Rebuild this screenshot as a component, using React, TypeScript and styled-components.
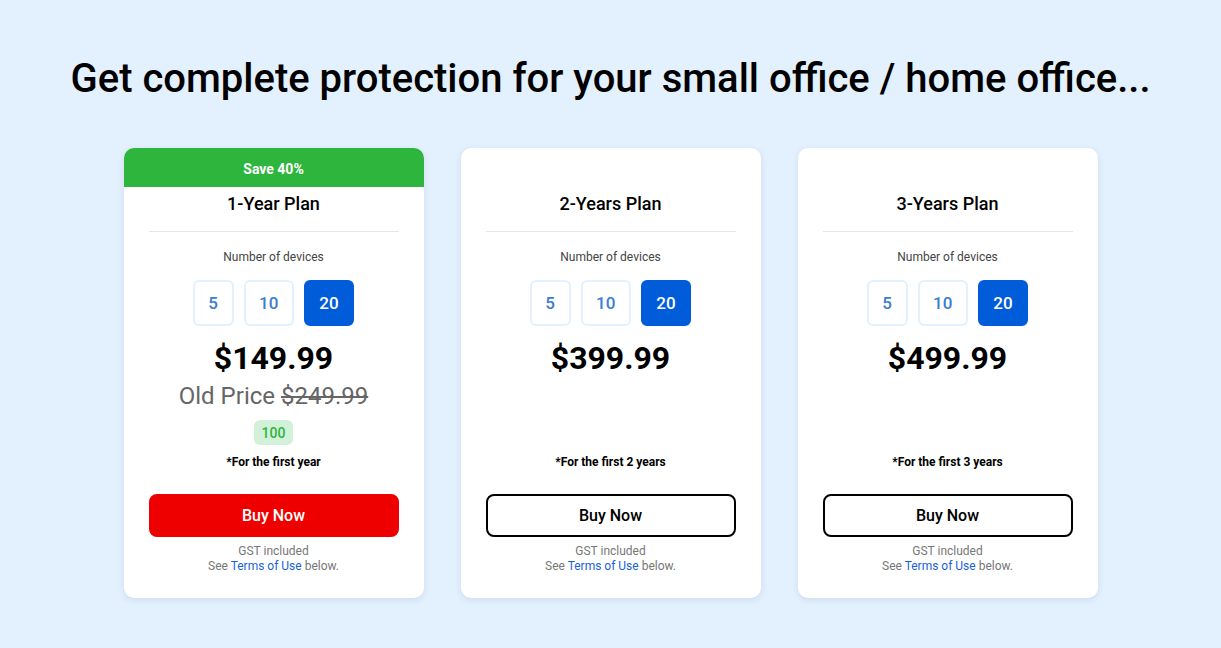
import React from "react";
import styled, { createGlobalStyle } from "styled-components";

const Global = createGlobalStyle`
  html, body { margin: 0; padding: 0; }
  body {
    background: #e3f0fd;
    font-family: Roboto, "Noto Sans", Arial, sans-serif;
    color: #000;
  }
  * { box-sizing: border-box; }
`;

const Page = styled.div`
  width: 1221px;
  min-height: 648px;
  display: flex;
  flex-direction: column;
  align-items: center;
  padding-top: 56px;
`;

const Heading = styled.h1`
  margin: 0;
  font-size: 40px;
  line-height: 46px;
  font-weight: 500;
  text-align: center;
  color: #000;
`;

const Cards = styled.div`
  display: flex;
  gap: 37px;
  margin-top: 46px;
`;

const Card = styled.div`
  width: 300px;
  height: 450px;
  background: #fff;
  border-radius: 10px;
  overflow: hidden;
  box-shadow: 0 2px 6px rgba(40, 80, 130, 0.12);
  display: flex;
  flex-direction: column;
  align-items: center;
  padding: 0 25px;
`;

const Banner = styled.div<{ $show: boolean }>`
  align-self: stretch;
  margin: 0 -25px;
  height: 39px;
  background: ${(p) => (p.$show ? "#2db53d" : "transparent")};
  color: #fff;
  font-size: 14px;
  font-weight: 700;
  display: flex;
  align-items: center;
  justify-content: center;
  padding-top: 2px;
`;

const Title = styled.div`
  margin-top: 6px;
  font-size: 18px;
  line-height: 22px;
  font-weight: 500;
`;

const Divider = styled.div`
  align-self: stretch;
  height: 1px;
  background: #e4e6e9;
  margin-top: 16px;
`;

const Label = styled.div`
  margin-top: 17px;
  font-size: 12px;
  line-height: 16px;
  color: #444;
`;

const Devices = styled.div`
  display: flex;
  gap: 10px;
  margin-top: 15px;
`;

const DeviceButton = styled.button<{ $active: boolean }>`
  height: 46px;
  padding: 0 13.5px;
  min-width: 40px;
  border-radius: 6px;
  border: 2px solid ${(p) => (p.$active ? "#005cd9" : "#e3f0fd")};
  background: ${(p) => (p.$active ? "#005cd9" : "#fff")};
  color: ${(p) => (p.$active ? "#fff" : "#3b7dd0")};
  font-family: inherit;
  font-size: 17px;
  font-weight: 500;
  cursor: pointer;
`;

const PriceBlock = styled.div`
  margin-top: 12px;
  height: 116px;
  display: flex;
  flex-direction: column;
  align-items: center;
`;

const Price = styled.div`
  font-size: 32px;
  line-height: 40px;
  font-weight: 700;
`;

const OldPrice = styled.div`
  margin-top: 4px;
  font-size: 24px;
  line-height: 28px;
  color: #666;
  s { text-decoration-thickness: 2px; }
`;

const Badge = styled.div`
  margin-top: 10px;
  height: 25px;
  padding: 0 8px;
  border-radius: 6px;
  background: #d3f1d8;
  color: #2db53d;
  font-size: 14px;
  font-weight: 500;
  display: flex;
  align-items: center;
`;

const Note = styled.div`
  font-size: 12px;
  line-height: 16px;
  font-weight: 700;
`;

const BuyButton = styled.button<{ $primary: boolean }>`
  margin-top: 24px;
  align-self: stretch;
  height: 43px;
  border-radius: 8px;
  border: 2px solid ${(p) => (p.$primary ? "#ee0000" : "#000")};
  background: ${(p) => (p.$primary ? "#ee0000" : "#fff")};
  color: ${(p) => (p.$primary ? "#fff" : "#000")};
  font-family: inherit;
  font-size: 16px;
  font-weight: 500;
  cursor: pointer;
`;

const Fine = styled.div`
  margin-top: 7px;
  font-size: 12px;
  line-height: 15px;
  color: #777;
  text-align: center;
`;

const Link = styled.a`
  color: #1a5fd6;
  text-decoration: none;
`;

type Plan = {
  title: string;
  price: string;
  old?: string;
  badge?: string;
  note: string;
  save?: string;
  primary?: boolean;
};

const plans: Plan[] = [
  {
    title: "1-Year Plan",
    price: "$149.99",
    old: "$249.99",
    badge: "100",
    note: "*For the first year",
    save: "Save 40%",
    primary: true,
  },
  { title: "2-Years Plan", price: "$399.99", note: "*For the first 2 years" },
  { title: "3-Years Plan", price: "$499.99", note: "*For the first 3 years" },
];

export default function App() {
  return (
    <>
      <Global />
      <Page>
        <Heading>Get complete protection for your small office / home office...</Heading>
        <Cards>
          {plans.map((p) => (
            <Card key={p.title}>
              <Banner $show={!!p.save}>{p.save}</Banner>
              <Title>{p.title}</Title>
              <Divider />
              <Label>Number of devices</Label>
              <Devices>
                {["5", "10", "20"].map((d) => (
                  <DeviceButton key={d} $active={d === "20"}>
                    {d}
                  </DeviceButton>
                ))}
              </Devices>
              <PriceBlock>
                <Price>{p.price}</Price>
                {p.old && (
                  <OldPrice>
                    Old Price <s>{p.old}</s>
                  </OldPrice>
                )}
                {p.badge && <Badge>{p.badge}</Badge>}
              </PriceBlock>
              <Note>{p.note}</Note>
              <BuyButton $primary={!!p.primary}>Buy Now</BuyButton>
              <Fine>
                GST included
                <br />
                See <Link href="#">Terms of Use</Link> below.
              </Fine>
            </Card>
          ))}
        </Cards>
      </Page>
    </>
  );
}
